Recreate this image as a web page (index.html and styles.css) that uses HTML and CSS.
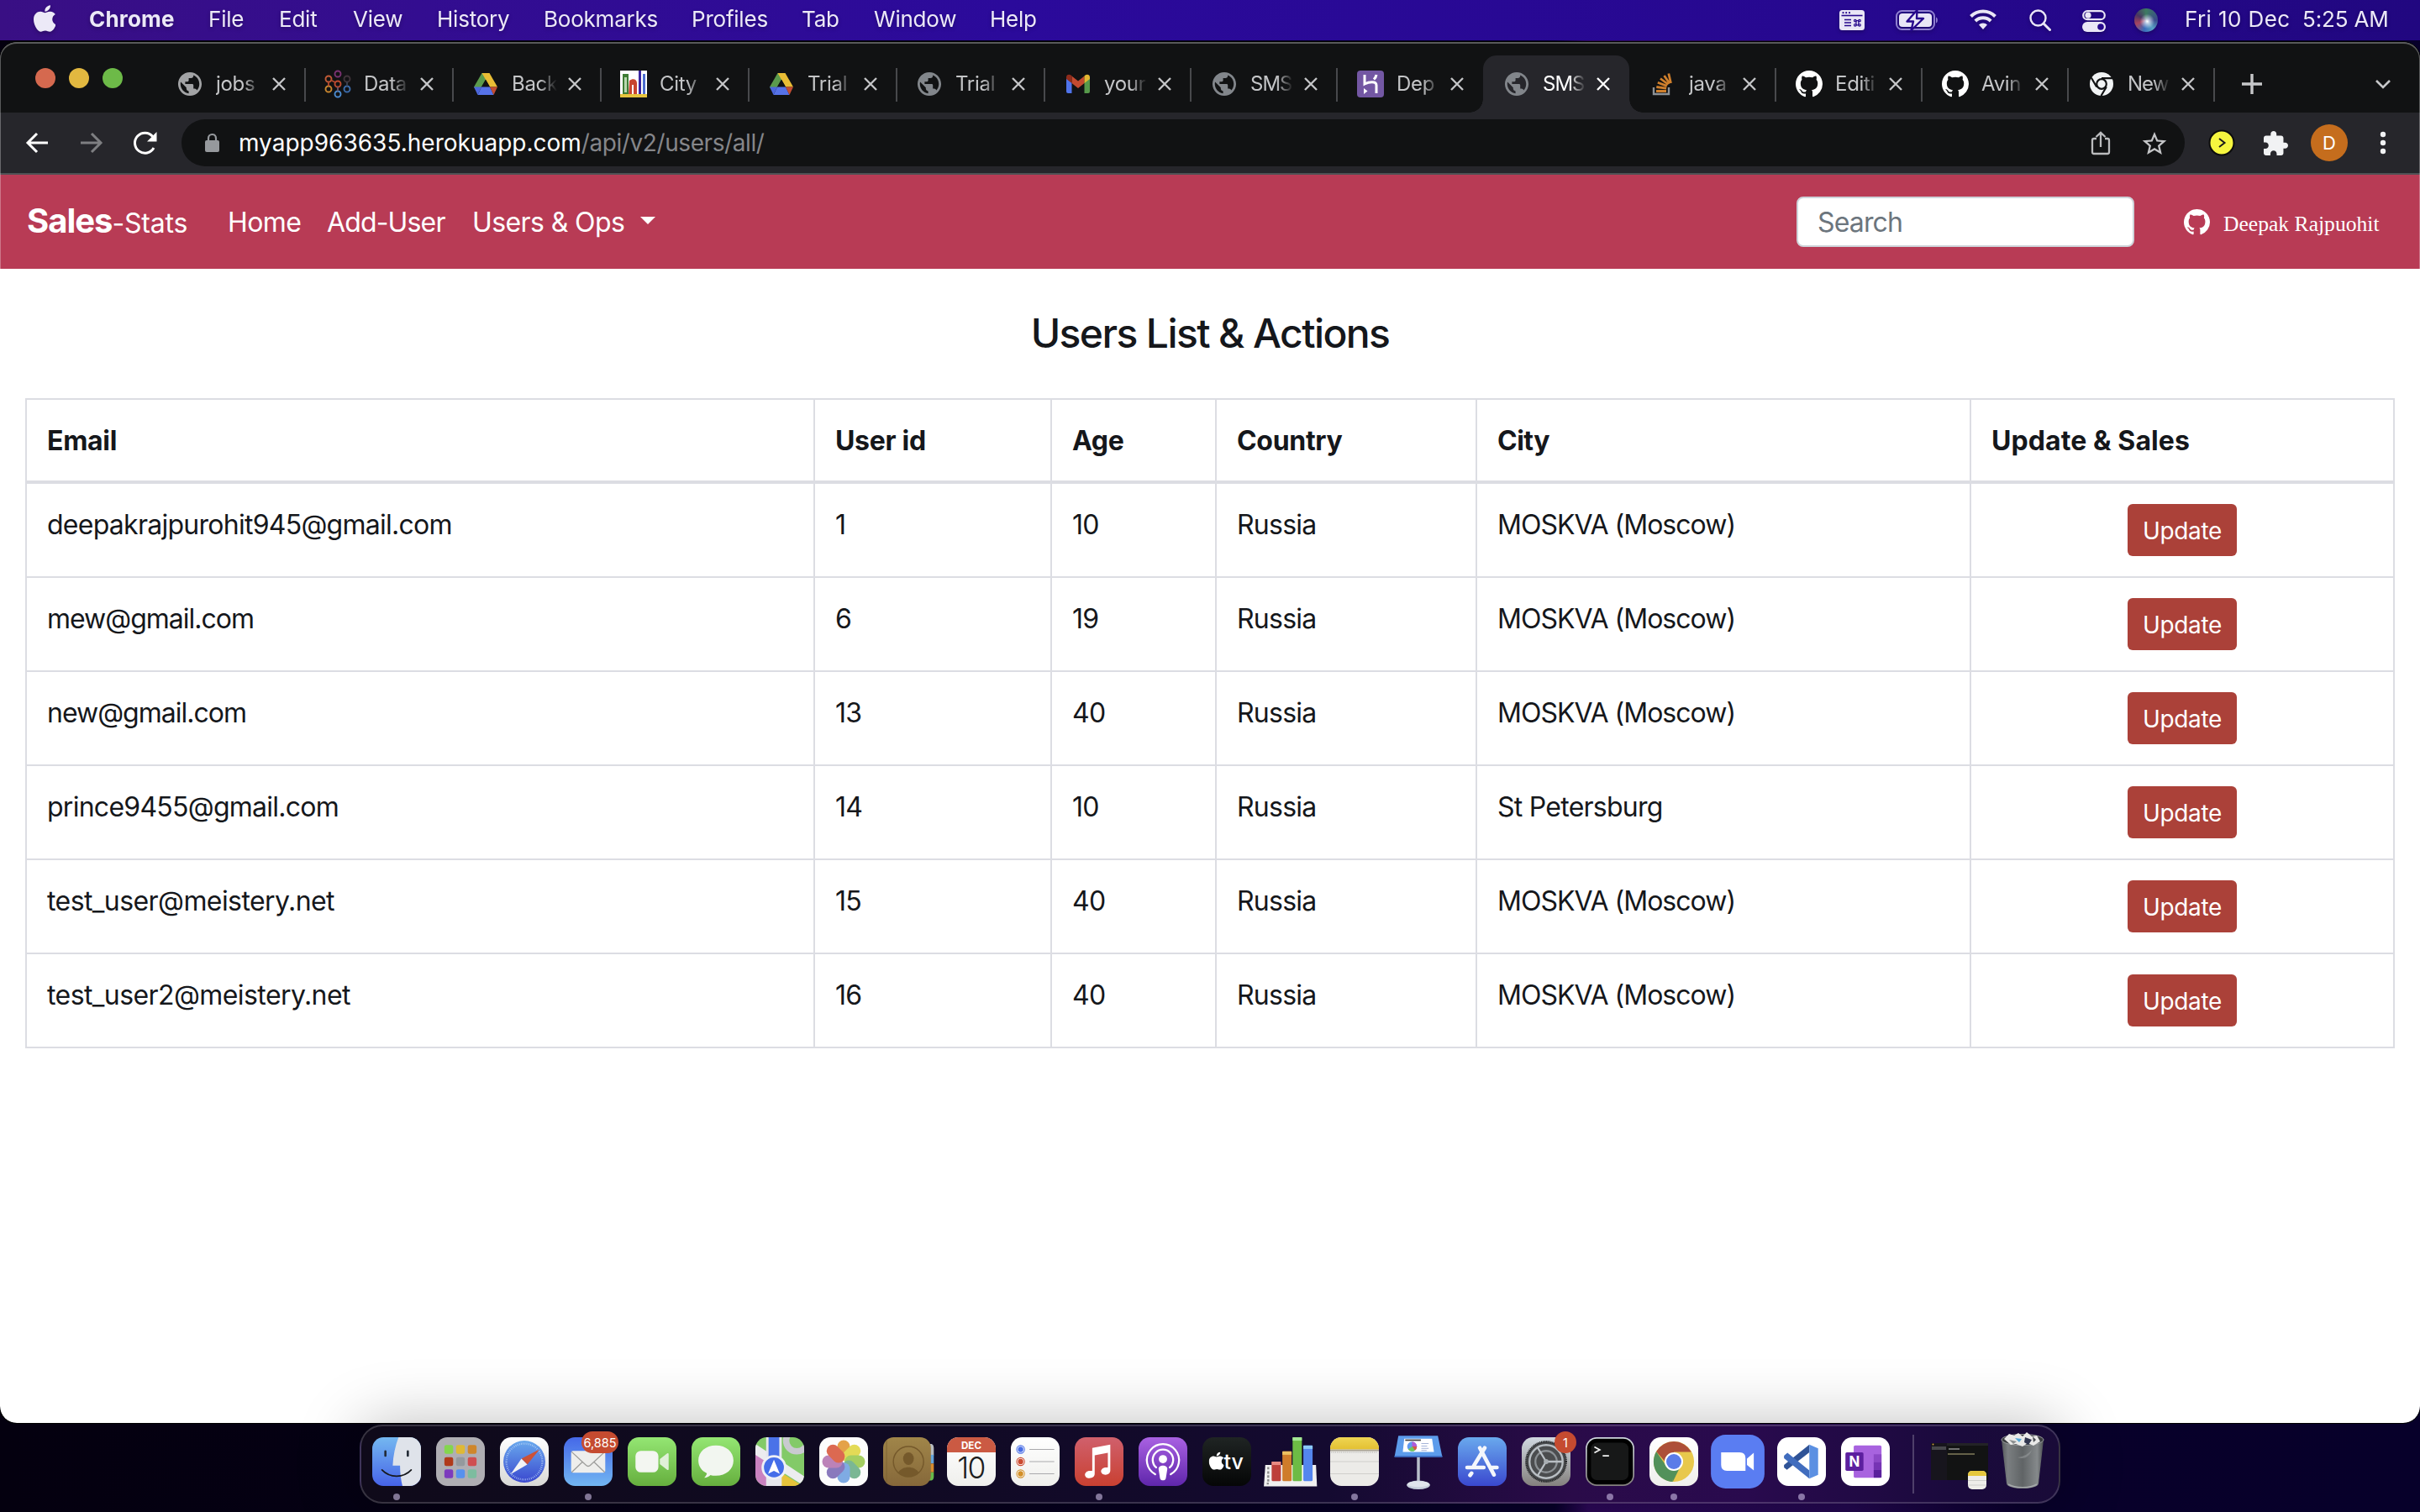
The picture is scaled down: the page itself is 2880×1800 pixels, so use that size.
FILE: index.html
```
<!DOCTYPE html>
<html lang="en">
<head>
<meta charset="utf-8">
<title>Sales-Stats</title>
<link rel="stylesheet" href="styles.css">
</head>
<body>
<svg class="defs" aria-hidden="true">
  <defs>
    <symbol id="globe" viewBox="0.6 0.6 22.8 22.8"><path d="M12 2C6.48 2 2 6.48 2 12s4.48 10 10 10 10-4.48 10-10S17.52 2 12 2zm-1 17.93c-3.95-.49-7-3.85-7-7.93 0-.62.08-1.21.21-1.79L9 15v1c0 1.1.9 2 2 2v1.93zm6.9-2.54c-.26-.81-1-1.39-1.9-1.39h-1v-3c0-.55-.45-1-1-1H8v-2h2c.55 0 1-.45 1-1V7h2c1.1 0 2-.9 2-2v-.41c2.93 1.19 5 4.06 5 7.41 0 2.08-.8 3.97-2.1 5.39z"/></symbol>
    <symbol id="github" viewBox="0 0 16 16"><path d="M8 0C3.58 0 0 3.58 0 8c0 3.54 2.29 6.53 5.47 7.59.4.07.55-.17.55-.38 0-.19-.01-.82-.01-1.49-2.01.37-2.53-.49-2.69-.94-.09-.23-.48-.94-.82-1.13-.28-.15-.68-.52-.01-.53.63-.01 1.08.58 1.23.82.72 1.21 1.87.87 2.33.66.07-.52.28-.87.51-1.07-1.78-.2-3.64-.89-3.64-3.95 0-.87.31-1.59.82-2.15-.08-.2-.36-1.02.08-2.12 0 0 .67-.21 2.2.82.64-.18 1.32-.27 2-.27s1.36.09 2 .27c1.53-1.04 2.2-.82 2.2-.82.44 1.1.16 1.92.08 2.12.51.56.82 1.27.82 2.15 0 3.07-1.87 3.75-3.65 3.95.29.25.54.73.54 1.48 0 1.07-.01 1.93-.01 2.2 0 .21.15.46.55.38A8.01 8.01 0 0 0 16 8c0-4.42-3.58-8-8-8z"/></symbol>
    <symbol id="apple" viewBox="4 32 367 448"><path d="M318.7 268.7c-.2-36.7 16.4-64.4 50-84.8-18.8-26.9-47.2-41.7-84.7-44.6-35.5-2.8-74.3 20.7-88.5 20.7-15 0-49.4-19.7-76.4-19.7C63.3 141.2 4 184.8 4 273.5q0 39.3 14.4 81.2c12.8 36.7 59 126.7 107.2 125.2 25.2-.6 43-17.9 75.8-17.9 31.8 0 48.3 17.9 76.4 17.9 48.6-.7 90.4-82.5 102.6-119.3-65.2-30.7-61.7-90-61.7-91.9zm-56.6-164.2c27.3-32.4 24.8-61.9 24-72.5-24.1 1.4-52 16.4-67.9 34.9-17.5 19.8-27.8 44.3-25.6 71.9 26.1 2 49.9-11.4 69.5-34.3z"/></symbol>
    <symbol id="drive" viewBox="0 0 32 32"><path fill="#5b9a4c" d="M11.500 3h9L6.500 27 2 19.500z"/><path fill="#e9bd35" d="M11.500 3h9L30 19.500h-9z"/><path fill="#111213" d="M16 10.800l-5 8.700h10z"/><path fill="#5672e8" d="M11 19.500h10l4.500 9.500H6.500z"/><path fill="#4c67dd" d="M2 19.500h9L6.500 29z"/><path fill="#c24d33" d="M21 19.500h9L25.500 29z"/></symbol>
    <symbol id="close" viewBox="0 0 16 16"><path fill="none" stroke="currentColor" stroke-width="2.400" d="M1 1l14 14M15 1L1 15"/></symbol>
    <linearGradient id="gBlue" x1="0" y1="0" x2="0" y2="1"><stop offset="0" stop-color="#74b8f0"/><stop offset="1" stop-color="#4663e8"/></linearGradient>
    <linearGradient id="gBlueUp" x1="0" y1="0" x2="0" y2="1"><stop offset="0" stop-color="#4568e8"/><stop offset="1" stop-color="#72b6f2"/></linearGradient>
    <linearGradient id="gGreen" x1="0" y1="0" x2="0" y2="1"><stop offset="0" stop-color="#94e673"/><stop offset="1" stop-color="#66af3e"/></linearGradient>
    <linearGradient id="gWhite" x1="0" y1="0" x2="0" y2="1"><stop offset="0" stop-color="#fff"/><stop offset="1" stop-color="#d8d8d6"/></linearGradient>
    <linearGradient id="gPaper" x1="0" y1="0" x2="0" y2="1"><stop offset="0" stop-color="#fff"/><stop offset="1" stop-color="#efefec"/></linearGradient>
    <linearGradient id="gRed" x1="0" y1="0" x2="0" y2="1"><stop offset="0" stop-color="#d0606c"/><stop offset="1" stop-color="#c94031"/></linearGradient>
    <linearGradient id="gPurple" x1="0" y1="0" x2="0" y2="1"><stop offset="0" stop-color="#a961e2"/><stop offset="1" stop-color="#5f26ab"/></linearGradient>
    <linearGradient id="gBrown" x1="0" y1="0" x2="0" y2="1"><stop offset="0" stop-color="#a08549"/><stop offset="1" stop-color="#86683a"/></linearGradient>
    <linearGradient id="gDark" x1="0" y1="0" x2="0" y2="1"><stop offset="0" stop-color="#1f2423"/><stop offset="1" stop-color="#050606"/></linearGradient>
    <linearGradient id="gSteel" x1="0" y1="0" x2="0" y2="1"><stop offset="0" stop-color="#d0d8e0"/><stop offset="1" stop-color="#84817e"/></linearGradient>
    <linearGradient id="gStore" x1="0" y1="0" x2="0" y2="1"><stop offset="0" stop-color="#69a9ed"/><stop offset="1" stop-color="#3a48cf"/></linearGradient>
    <linearGradient id="gYellow" x1="0" y1="0" x2="0" y2="1"><stop offset="0" stop-color="#efd553"/><stop offset="1" stop-color="#e3c032"/></linearGradient>
    <linearGradient id="gBin" x1="0" y1="0" x2="1" y2="0"><stop offset="0" stop-color="#54585a"/><stop offset=".15" stop-color="#7b7f81"/><stop offset=".5" stop-color="#606466"/><stop offset=".85" stop-color="#85898b"/><stop offset="1" stop-color="#4b4f51"/></linearGradient>
    <clipPath id="tile"><rect width="100" height="100" rx="23"/></clipPath>
  </defs>
</svg>

<header class="menubar">
  <svg class="apple-menu"><use href="#apple"/></svg>
  <nav class="menus">
    <span class="app-name">Chrome</span><span>File</span><span>Edit</span><span>View</span><span>History</span><span>Bookmarks</span><span>Profiles</span><span>Tab</span><span>Window</span><span>Help</span>
  </nav>
  <div class="status">
    <svg class="st-keys" viewBox="0 0 30 24"><rect width="30" height="24" rx="3.500" fill="#e9e6f6"/><path d="M2.500 6.500h25" stroke="#26088c" stroke-width="1.600"/><g fill="#26088c"><circle cx="4.500" cy="3.200" r="1.100"/><circle cx="8.200" cy="3.200" r="1.100"/><circle cx="12" cy="3.200" r="1.100"/></g><path d="M6 11.500h8M6 15h8M6 18.500h8" stroke="#26088c" stroke-width="1.500"/><g fill="none" stroke="#26088c" stroke-width="1.200"><circle cx="18.800" cy="12.600" r="1.300"/><circle cx="24" cy="12.600" r="1.300"/><circle cx="18.800" cy="17.800" r="1.300"/><circle cx="24" cy="17.800" r="1.300"/><path d="M20 12.600v5.200h2.800v-5.200z"/></g></svg>
    <svg class="st-battery" viewBox="0 0 51 26"><rect x="1" y="2" width="45" height="22" rx="6.500" fill="none" stroke="#8f7fd0" stroke-width="2"/><rect x="4" y="5" width="39" height="16" rx="4" fill="#e9e6f6"/><path d="M48 9.500c2.500.8 2.500 6.200 0 7z" fill="#8f7fd0"/><path d="M25.500 1L13.500 14.500h7.500L18.500 25 33 11h-8z" fill="#e9e6f6" stroke="#26088c" stroke-width="2.400" stroke-linejoin="round"/></svg>
    <svg class="st-wifi" viewBox="0 0 32 24"><g fill="none" stroke="#e9e6f6" stroke-width="4"><path d="M1.500 8.500a20.500 20.500 0 0 1 29 0"/><path d="M6.800 14a13 13 0 0 1 18.400 0"/></g><path d="M16 24l-5-5.400a7 7 0 0 1 10 0z" fill="#e9e6f6"/></svg>
    <svg class="st-search" viewBox="0 0 26 26"><circle cx="10.500" cy="10.500" r="9" fill="none" stroke="#e9e6f6" stroke-width="2.400"/><path d="M17 17l7.500 7.500" stroke="#e9e6f6" stroke-width="3" stroke-linecap="round"/></svg>
    <svg class="st-control" viewBox="0 0 28 26"><rect x="1.200" y="1.200" width="25.600" height="10" rx="5" fill="none" stroke="#e9e6f6" stroke-width="2.200"/><circle cx="7" cy="6.200" r="3.600" fill="#e9e6f6"/><rect y="14" width="28" height="12" rx="6" fill="#e9e6f6"/><circle cx="22" cy="20" r="3.800" fill="#26088c"/></svg>
    <span class="siri"></span>
    <span class="date">Fri 10 Dec</span>
    <span class="time">5:25 AM</span>
  </div>
</header>

<main class="window">
  <div class="tabstrip">
    <div class="lights"><i class="red"></i><i class="amber"></i><i class="green"></i></div>
    <div class="tabs">
      <div class="tab wide"><svg class="fav pale"><use href="#globe"/></svg><span class="label">jobs</span><svg class="x"><use href="#close"/></svg></div>
      <div class="tab wide"><svg class="fav" viewBox="0 0 32 32"><g fill="none" stroke-width="1.900"><circle cx="16" cy="4" r="3.500" stroke="#7b3272"/><circle cx="5" cy="10" r="3.500" stroke="#c25b36"/><circle cx="27" cy="10" r="3.500" stroke="#40343a"/><circle cx="16" cy="16" r="3.500" stroke="#c04a30"/><circle cx="5" cy="22" r="3.500" stroke="#c9872f"/><circle cx="27" cy="22" r="3.500" stroke="#3c6dad"/><circle cx="16" cy="28" r="3.500" stroke="#4b8bd0"/><path d="M13 14L8 11.500M5 13.500v5" stroke="#b0482f"/><path d="M27 13.500v5" stroke="#3a4353"/><path d="M16 19.500v5" stroke="#6c5568"/></g></svg><span class="label">Data</span><svg class="x"><use href="#close"/></svg></div>
      <div class="tab wide"><svg class="fav"><use href="#drive"/></svg><span class="label">Back</span><svg class="x"><use href="#close"/></svg></div>
      <div class="tab wide"><svg class="fav" viewBox="0 0 32 32"><path fill="#fff" d="M0 0h32v32H0z"/><path fill="#3f7d35" d="M3 4h7v25H3z"/><path fill="#b9d8b0" d="M5 8h3v18H5z"/><path fill="#c8452f" d="M11 12c4-3 9-2 9 3v15h-4V17h-2v13h-4z"/><path fill="#3a24a0" d="M22 0h3v30h-3z"/><path fill="#4b6cd0" d="M27 4h3v25h-3z"/><path fill="#e6c33d" d="M0 28h32v4H0z"/></svg><span class="label">City</span><svg class="x"><use href="#close"/></svg></div>
      <div class="tab wide"><svg class="fav"><use href="#drive"/></svg><span class="label">Trial</span><svg class="x"><use href="#close"/></svg></div>
      <div class="tab wide"><svg class="fav grey"><use href="#globe"/></svg><span class="label">Trial</span><svg class="x"><use href="#close"/></svg></div>
      <div class="tab"><svg class="fav" viewBox="0 0 32 32"><path fill="#4f73ea" d="M2 9l6.500 5v13H4a2 2 0 0 1-2-2z"/><path fill="#579a4b" d="M30 9l-6.500 5v13H28a2 2 0 0 0 2-2z"/><path fill="#c34a30" d="M8.500 6.500L16 12.500l7.500-6V15L16 21l-7.500-6z"/><path fill="#8f2c1c" d="M2 8c0-3.500 3.500-4 5.500-2.500l1 1V15L2 10z"/><path fill="#e3b732" d="M30 8c0-3.500-3.500-4-5.500-2.500l-1 1V15L30 10z"/></svg><span class="label">your</span><svg class="x"><use href="#close"/></svg></div>
      <div class="tab"><svg class="fav grey"><use href="#globe"/></svg><span class="label caps">SMS</span><svg class="x"><use href="#close"/></svg></div>
      <div class="tab before-active"><svg class="fav" viewBox="0 0 32 32"><rect width="32" height="32" rx="4" fill="#7357a3"/><path d="M9 5v11c5-2.500 14-4 14 1.500V27M23 5c-.3 2.500-1.500 4-3 5.500" fill="none" stroke="#fff" stroke-width="3"/><path fill="#fff" d="M8 21l4.500 3.500L8 28z"/></svg><span class="label">Dep</span><svg class="x"><use href="#close"/></svg></div>
      <div class="tab active"><svg class="fav grey"><use href="#globe"/></svg><span class="label caps">SMS</span><svg class="x"><use href="#close"/></svg></div>
      <div class="tab"><svg class="fav" viewBox="0 0 32 32"><path d="M5 20v8h18v-8" fill="none" stroke="#8d9297" stroke-width="2.400"/><g stroke="#cf7f2c" stroke-width="2.800"><path d="M8 24.500h12M8.300 19.500l11.800 1.600M9.800 14.200l11 4.200M13 9.500l9.300 7M17.500 6l6.500 9.500M22.800 3.500l2.700 11.500"/></g></svg><span class="label">java</span><svg class="x"><use href="#close"/></svg></div>
      <div class="tab"><svg class="fav white"><use href="#github"/></svg><span class="label">Editi</span><svg class="x"><use href="#close"/></svg></div>
      <div class="tab"><svg class="fav white"><use href="#github"/></svg><span class="label">Avin</span><svg class="x"><use href="#close"/></svg></div>
      <div class="tab"><svg class="fav" viewBox="0 0 32 32"><circle cx="16" cy="16" r="14" fill="#f1f3f4"/><circle cx="16" cy="16" r="5.800" fill="none" stroke="#111213" stroke-width="2.200"/><path d="M16 9.200h13M10.200 19.500L3.800 8.500M21.800 19.500L15.500 30" stroke="#111213" stroke-width="2.200"/></svg><span class="label caps">New</span><svg class="x"><use href="#close"/></svg></div>
    </div>
    <svg class="new-tab" viewBox="0 0 24 24"><path d="M12 0v24M0 12h24" stroke="#c6c7c9" stroke-width="3.400"/></svg>
    <svg class="tab-search" viewBox="0 0 20 12"><path d="M2 2l8 8 8-8" fill="none" stroke="#c6c7c9" stroke-width="2.600"/></svg>
  </div>

  <div class="toolbar">
    <svg class="back" viewBox="0 0 27 26"><path d="M26 13H3M13 2L2 13l11 11" fill="none" stroke="#fff" stroke-width="3"/></svg>
    <svg class="forward" viewBox="0 0 27 26"><path d="M1 13h23M14 2l11 11-11 11" fill="none" stroke="#7e7f82" stroke-width="3"/></svg>
    <svg class="reload" viewBox="0 0 28 28"><path d="M24 20a12 12 0 1 1-1.300-13.500" fill="none" stroke="#fff" stroke-width="3"/><path d="M27.500 1v11.500H16z" fill="#fff"/></svg>
    <div class="omnibox">
      <svg class="lock" viewBox="0 0 17 22"><rect y="8" width="17" height="14" rx="2" fill="#96999d"/><path d="M4 9V5.500a4.500 4.500 0 0 1 9 0V9" fill="none" stroke="#96999d" stroke-width="2.200"/></svg>
      <span class="host">myapp963635.herokuapp.com</span><span class="path">/api/v2/users/all/</span>
      <svg class="share" viewBox="0 0 22 29"><path d="M6 9H3a2 2 0 0 0-2 2v14a2 2 0 0 0 2 2h16a2 2 0 0 0 2-2V11a2 2 0 0 0-2-2h-3M11 19V2M5.500 7L11 1.800 16.500 7" fill="none" stroke="#babbbd" stroke-width="2.300"/></svg>
      <svg class="star" viewBox="1.500 1.500 21 20"><path fill="#c4c5c7" d="M22 9.240l-7.190-.62L12 2 9.190 8.630 2 9.240l5.460 4.730L5.820 21 12 17.270 18.180 21l-1.630-7.030L22 9.240zM12 15.400l-3.760 2.270 1-4.280-3.320-2.880 4.380-.38L12 6.100l1.710 4.040 4.380.38-3.320 2.880 1 4.280L12 15.400z"/></svg>
    </div>
    <svg class="ext" viewBox="0 0 32 32"><circle cx="16" cy="16" r="14.500" fill="#f6f63f" stroke="#0c0c0c" stroke-width="2"/><path d="M13 11l6.500 5-6.500 5" fill="none" stroke="#1b1b1b" stroke-width="2"/></svg>
    <svg class="puzzle" viewBox="2 1 21 21"><path fill="#f1f2f4" d="M20.500 11H19V7c0-1.100-.9-2-2-2h-4V3.500C13 2.120 11.880 1 10.500 1S8 2.120 8 3.500V5H4c-1.100 0-1.990.9-1.990 2v3.800H3.500c1.490 0 2.700 1.210 2.700 2.700s-1.210 2.700-2.700 2.700H2V20c0 1.100.9 2 2 2h3.800v-1.500c0-1.490 1.210-2.700 2.700-2.700 1.490 0 2.700 1.210 2.700 2.700V22H17c1.100 0 2-.9 2-2v-4h1.500c1.380 0 2.500-1.120 2.500-2.500S21.880 11 20.500 11z"/></svg>
    <span class="avatar">D</span>
    <svg class="dots" viewBox="0 0 8 28"><g fill="#f1f2f4"><circle cx="4" cy="4" r="3.200"/><circle cx="4" cy="14" r="3.200"/><circle cx="4" cy="24" r="3.200"/></g></svg>
  </div>

  <div class="navbar">
    <span class="brand"><b>Sales</b>-Stats</span>
    <a class="home">Home</a><a class="add">Add-User</a><a class="ops">Users &amp; Ops</a><i class="caret"></i>
    <div class="search">Search</div>
    <svg class="gh"><use href="#github"/></svg>
    <span class="author">Deepak Rajpuohit</span>
  </div>

  <section class="page">
    <h1>Users List &amp; Actions</h1>
    <table>
      <colgroup><col class="c1"><col class="c2"><col class="c3"><col class="c4"><col class="c5"><col class="c6"></colgroup>
      <thead><tr><th>Email</th><th>User id</th><th>Age</th><th>Country</th><th class="tight">City</th><th class="loose">Update &amp; Sales</th></tr></thead>
      <tbody>
        <tr><td>deepakrajpurohit945@gmail.com</td><td>1</td><td>10</td><td>Russia</td><td class="city">MOSKVA (Moscow)</td><td class="act"><span class="btn">Update</span></td></tr>
        <tr><td class="short">mew@gmail.com</td><td>6</td><td>19</td><td>Russia</td><td class="city">MOSKVA (Moscow)</td><td class="act"><span class="btn">Update</span></td></tr>
        <tr><td class="short">new@gmail.com</td><td>13</td><td>40</td><td>Russia</td><td class="city">MOSKVA (Moscow)</td><td class="act"><span class="btn">Update</span></td></tr>
        <tr><td>prince9455@gmail.com</td><td>14</td><td>10</td><td>Russia</td><td>St Petersburg</td><td class="act"><span class="btn">Update</span></td></tr>
        <tr><td class="long">test_user@meistery.net</td><td>15</td><td>40</td><td>Russia</td><td class="city">MOSKVA (Moscow)</td><td class="act"><span class="btn">Update</span></td></tr>
        <tr><td class="long">test_user2@meistery.net</td><td>16</td><td>40</td><td>Russia</td><td class="city">MOSKVA (Moscow)</td><td class="act"><span class="btn">Update</span></td></tr>
      </tbody>
    </table>
  </section>
</main>

<footer class="dock">
  <div class="app running"><svg viewBox="0 0 100 100"><g clip-path="url(#tile)"><path fill="url(#gBlue)" d="M0 0h100v100H0z"/><path fill="#dfe3ea" d="M54 0c-7 18-11 38-12 58h15c0 16 2 30 5 42h38V0z"/></g><path d="M27 29v9M73 29v9" stroke="#222a35" stroke-width="4.500" stroke-linecap="round"/><path d="M20 67c16 17 44 17 60 0" fill="none" stroke="#17191d" stroke-width="3" stroke-linecap="round"/></svg></div>
  <div class="app"><svg viewBox="0 0 100 100"><rect width="100" height="100" rx="23" fill="#afaeb3"/><g><rect x="17" y="16" width="18" height="18" rx="4" fill="#84d64e"/><rect x="41" y="16" width="18" height="18" rx="4" fill="#dfb936"/><rect x="65" y="16" width="18" height="18" rx="4" fill="#cf862b"/><rect x="17" y="41" width="18" height="18" rx="4" fill="#b03a1b"/><rect x="41" y="41" width="18" height="18" rx="4" fill="#94999e"/><rect x="65" y="41" width="18" height="18" rx="4" fill="#cf4e51"/><rect x="17" y="66" width="18" height="18" rx="4" fill="#7c3bbd"/><rect x="41" y="66" width="18" height="18" rx="4" fill="#5791ee"/><rect x="65" y="66" width="18" height="18" rx="4" fill="#7dbc9f"/></g></svg></div>
  <div class="app"><svg viewBox="0 0 100 100"><rect width="100" height="100" rx="23" fill="url(#gWhite)"/><circle cx="50" cy="50" r="43" fill="url(#gStore)"/><circle cx="50" cy="50" r="37" fill="none" stroke="#b8d3f6" stroke-width="4" stroke-dasharray="1.200 2.670"/><path d="M81 25L56 56 44 44z" fill="#cc5138"/><path d="M22 76L56 56 44 44z" fill="#f2f3f5"/></svg></div>
  <div class="app running"><svg viewBox="0 0 100 100"><rect width="100" height="100" rx="23" fill="url(#gBlueUp)"/><rect x="15" y="28" width="70" height="45" rx="4" fill="#eeeeec"/><path d="M16 30l29 27c3 3 7 3 10 0l29-27M16 72l22-21M84 72L62 51" fill="none" stroke="#9d9d9b" stroke-width="2.200"/></svg><span class="badge pill">6,885</span></div>
  <div class="app"><svg viewBox="0 0 100 100"><rect width="100" height="100" rx="23" fill="url(#gGreen)"/><rect x="16" y="28" width="47" height="44" rx="11" fill="#f3f6f1"/><path d="M66 45l15-12c2-1 3 0 3 2v30c0 2-1 3-3 2L66 55z" fill="#e0f0d8"/></svg></div>
  <div class="app"><svg viewBox="0 0 100 100"><rect width="100" height="100" rx="23" fill="url(#gGreen)"/><path d="M50 17c21 0 36 13 36 31S71 79 50 79c-4 0-8-.5-11-1.500-3 3-8 5.500-13 5.500 3-3 5-6 5.500-9C20 69 14 59 14 48c0-18 15-31 36-31z" fill="#f2f6f0"/></svg></div>
  <div class="app"><svg viewBox="0 0 100 100"><g clip-path="url(#tile)"><path fill="#83ca68" d="M0 0h100v100H0z"/><path fill="#c982c0" d="M0 30l25 18v52H0z"/><path fill="#e6c33b" d="M53 100V73l44 27z"/><path fill="#ececef" d="M0 14l100 66v20L0 36z"/><path fill="#e6e7ec" d="M22 0h32v100H22z"/><path fill="#4a72e8" d="M27 0h22v55H27z"/><circle cx="85" cy="7" r="22" fill="none" stroke="#c9cad0" stroke-width="13"/></g><circle cx="38" cy="62" r="23" fill="#456ee9" stroke="#eef0f5" stroke-width="5"/><path d="M38 46l12 29-12-6-12 6z" fill="#fff"/></svg></div>
  <div class="app"><svg viewBox="0 0 100 100"><rect width="100" height="100" rx="23" fill="#fcfcfc"/><g opacity=".86"><rect x="37" y="6" width="26" height="42" rx="13" fill="#e1942c"/><rect x="37" y="6" width="26" height="42" rx="13" fill="#dfd53b" transform="rotate(45 50 50)"/><rect x="37" y="6" width="26" height="42" rx="13" fill="#96c748" transform="rotate(90 50 50)"/><rect x="37" y="6" width="26" height="42" rx="13" fill="#67ac83" transform="rotate(135 50 50)"/><rect x="37" y="6" width="26" height="42" rx="13" fill="#6b9ee0" transform="rotate(180 50 50)"/><rect x="37" y="6" width="26" height="42" rx="13" fill="#7764b3" transform="rotate(225 50 50)"/><rect x="37" y="6" width="26" height="42" rx="13" fill="#b26fae" transform="rotate(270 50 50)"/><rect x="37" y="6" width="26" height="42" rx="13" fill="#d75236" transform="rotate(315 50 50)"/></g></svg></div>
  <div class="app"><svg viewBox="0 0 100 100"><path fill="#b8bcc0" d="M92 14h8q4 2 4 8v15H92z"/><path fill="#66a5dc" d="M92 36h12v18H92z"/><path fill="#d98c2f" d="M92 54h12v18H92z"/><path fill="#67b94a" d="M92 72h12v9q0 6-5 8h-7z"/><rect width="98" height="100" rx="22" fill="url(#gBrown)"/><path d="M7 6v88" stroke="#7c6233" stroke-width="1.500"/><circle cx="52" cy="50" r="31" fill="none" stroke="#75592b" stroke-width="2.500"/><ellipse cx="52" cy="44" rx="11" ry="13" fill="#75592b"/><path d="M31 72c9-14 33-14 42 0-11 12-31 12-42 0z" fill="#75592b"/></svg></div>
  <div class="app"><svg viewBox="0 0 100 100"><g clip-path="url(#tile)"><path fill="url(#gPaper)" d="M0 0h100v100H0z"/><path fill="#cb5a43" d="M0 0h100v31H0z"/></g><text class="cal-month" x="50" y="24">DEC</text><text class="cal-day" x="49" y="84">10</text></svg></div>
  <div class="app"><svg viewBox="0 0 100 100"><rect width="100" height="100" rx="23" fill="url(#gPaper)"/><path d="M38 25h51M38 50h51M38 75h51" stroke="#a9a9ac" stroke-width="2"/><g stroke-width="1.800"><g fill="#fff"><circle cx="20" cy="25" r="8" stroke="#4a6fe6"/><circle cx="20" cy="50" r="8" stroke="#cb4a30"/><circle cx="20" cy="75" r="8" stroke="#d28f28"/></g></g><circle cx="20" cy="25" r="5.500" fill="#4a6fe6"/><circle cx="20" cy="50" r="5.500" fill="#cb4a30"/><circle cx="20" cy="75" r="5.500" fill="#d28f28"/></svg></div>
  <div class="app running"><svg viewBox="0 0 100 100"><rect width="100" height="100" rx="23" fill="url(#gRed)"/><path fill="#fff" d="M36 22l37-7v53c0 5-4 9-10 9-5 0-9-3-9-7s4-8 10-8c2 0 3 0 4-.5V32l-27 5v38c0 5-4 9-11 9-5 0-9-3-9-7s4-8 10-8c2 0 4 0 5-.5z"/></svg></div>
  <div class="app"><svg viewBox="0 0 100 100"><rect width="100" height="100" rx="23" fill="url(#gPurple)"/><g fill="none" stroke="#fff" stroke-width="4" stroke-linecap="round"><path d="M34 76a33 33 0 1 1 32 0"/><path d="M36 62a21 21 0 1 1 28 0"/></g><circle cx="50" cy="45" r="8.500" fill="#fff"/><path d="M41 65c0-9 18-9 18 0l-3 19c-1 6-11 6-12 0z" fill="#fff"/></svg></div>
  <div class="app"><svg viewBox="0 0 100 100"><rect width="100" height="100" rx="23" fill="url(#gDark)"/><svg x="13" y="30" width="31" height="37" fill="#fff"><use href="#apple"/></svg><text class="tv" x="64" y="65">tv</text></svg></div>
  <div class="app"><svg viewBox="0 0 100 100"><path fill="#f1f1f0" d="M-2 57h104l2 44H-5z"/><path d="M4 61v5M4 70v5M4 78v5M4 86v5M3 93v4" stroke="#8a8a8a" stroke-width="4"/><rect x="11" y="50" width="19" height="40" rx="2" fill="#bd403a"/><rect x="33" y="29" width="19" height="61" rx="2" fill="#cf7c2b"/><rect x="54" y="0" width="19" height="90" rx="2" fill="#6dbb45"/><rect x="76" y="17" width="19" height="73" rx="2" fill="#5486ee"/><path fill="#e88a82" d="M11 50h19v7H11z"/><path fill="#ecc161" d="M33 29h19v7H33z"/><path fill="#a3e893" d="M54 0h19v7H54z"/><path fill="#8ccaf8" d="M76 17h19v7H76z"/></svg></div>
  <div class="app running"><svg viewBox="0 0 100 100"><g clip-path="url(#tile)"><path fill="#ecebe8" d="M0 0h100v100H0z"/><path fill="url(#gYellow)" d="M0 0h100v25H0z"/><path d="M0 27h100" stroke="#a9a393" stroke-width="3"/><path d="M2 31h96" stroke="#a5a5a3" stroke-width="1.500" stroke-dasharray="2 2"/><path d="M0 50h100M0 75h100" stroke="#cfcfcc" stroke-width="2"/></g></svg></div>
  <div class="app"><svg viewBox="0 0 100 100"><path d="M47 40h6v56h-6z" fill="#b9bfca"/><ellipse cx="50" cy="98" rx="24" ry="9" fill="#c7cfdb"/><ellipse cx="50" cy="96" rx="22" ry="6" fill="#e0e5ec"/><path fill="#5c9ceb" d="M9-3h81l9 43H1z"/><path fill="#3e72c8" d="M1 38h98v3H1z"/><path fill="#fff" d="M21 3h57l4 27H18z"/><path d="M23 6h32" stroke="#444" stroke-width="3"/><circle cx="37" cy="19" r="10" fill="#5e9af0"/><path d="M37 19V9a10 10 0 0 1 10 10z" fill="#b05bd5"/><path d="M37 19h10a10 10 0 0 1-4 8z" fill="#d45b45"/><path d="M37 19l6 8a10 10 0 0 1-14-2z" fill="#6fc95a"/><path d="M56 13h15M56 18h12M56 23h15M56 27h11" stroke="#a6b4d8" stroke-width="1.800"/></svg></div>
  <div class="app"><svg viewBox="0 0 100 100"><rect width="100" height="100" rx="23" fill="url(#gStore)"/><g stroke="#f4f7fc" stroke-width="8" stroke-linecap="round"><path d="M55 22L33 58M45 22l29 55M19 62h34M70 62h10M28 74l-3 4"/></g></svg></div>
  <div class="app"><svg viewBox="0 0 100 100"><rect width="100" height="100" rx="23" fill="url(#gSteel)"/><circle cx="50" cy="50" r="41" fill="#4b4d4f" stroke="#222426" stroke-width="4" stroke-dasharray="2 1.300"/><circle cx="50" cy="50" r="34" fill="none" stroke="#b9bfc4" stroke-width="4"/><circle cx="50" cy="50" r="22" fill="none" stroke="#8b9094" stroke-width="4"/><path d="M50 50h33M50 50L33 22M50 50L33 78" stroke="#b9bfc4" stroke-width="4"/><circle cx="50" cy="50" r="5" fill="#a9afb3"/></svg><span class="badge round">1</span></div>
  <div class="app running"><svg viewBox="0 0 100 100"><rect width="100" height="100" rx="23" fill="url(#gSteel)"/><rect x="3" y="3" width="94" height="94" rx="20" fill="#000"/><rect x="11" y="11" width="77" height="77" rx="12" fill="#171818"/><path d="M18 20l11 6-11 6M35 38h13" fill="none" stroke="#f3f3f3" stroke-width="3"/></svg></div>
  <div class="app running"><svg viewBox="0 0 100 100"><rect width="100" height="100" rx="23" fill="url(#gPaper)"/><circle cx="50" cy="50" r="41.500" fill="#e8c84c"/><path fill="#ad4f38" d="M50 50h-18L14 29.300A41.500 41.500 0 0 1 86 30H50z"/><path fill="#52915a" d="M14 29.300L35 60l15 8-2.500 23.500A41.500 41.500 0 0 1 14 29.300z"/><path fill="#52915a" d="M48 91.500L62 63 45 66z"/><circle cx="50" cy="50" r="19" fill="#fff"/><circle cx="50" cy="50" r="15.500" fill="#5b7ce8"/></svg></div>
  <div class="app"><svg viewBox="0 0 100 100"><rect x="-5" y="-5" width="110" height="110" rx="30" fill="#5a7df2"/><path fill="#fff" d="M16 31h38q12 0 12 12v26H28q-12 0-12-12zM69 44l14-12v36L69 57z"/></svg></div>
  <div class="app running"><svg viewBox="0 0 100 100"><rect width="100" height="100" rx="23" fill="#fff"/><path fill="#2f5397" d="M14 62l6 5 46-36V15L14 57z"/><path fill="#416dbe" d="M14 38l7-6 45 36v17L14 43z"/><path fill="#5b90e2" d="M66 15l18 8v54l-18 8z"/></svg></div>
  <div class="app"><svg viewBox="0 0 100 100"><rect width="100" height="100" rx="23" fill="#fff"/><rect x="26" y="17" width="57" height="66" rx="3" fill="#a863df"/><path fill="#8c48c6" d="M67 35h16v16H67z"/><path fill="#7634b4" d="M67 51h16v16H67z"/><path fill="#59209c" d="M67 67h16v16H67z"/><rect x="9" y="31" width="37" height="38" rx="3" fill="#5c1f9f"/><text class="note-n" x="27.500" y="60">N</text></svg></div>
  <i class="divider"></i>
  <svg class="minimized" viewBox="0 0 68 56"><path fill="#121313" d="M0 0h68v44H0z"/><path fill="#17151d" d="M0 0h19v44H0z"/><path fill="#232326" d="M19 0h49v3H19z"/><circle cx="2.500" cy="1.500" r=".9" fill="#d8a53c"/><path fill="#47474b" d="M1 4h17v4H1z"/><path d="M21 7h13" stroke="#9a9a9a" stroke-width="1.400"/><path d="M20 13h32" stroke="#8a8461" stroke-width="1.400"/><rect x="44" y="33" width="22" height="22" rx="5" fill="#eeede9"/><path fill="#e6c83c" d="M44 39v-1q0-5 5-5h12q5 0 5 5v1z"/><path d="M44 44.500h22M44 50h22" stroke="#cfcfcc"/></svg>
  <svg class="trash" viewBox="0 0 52 68"><path fill="url(#gBin)" d="M1 9h50l-6 52c-1 8-37 8-38 0z"/><ellipse cx="26" cy="9" rx="25" ry="6.500" fill="#3a3d3f" stroke="#9a9d9f"/><path fill="#e9e9e8" d="M4 8l6-6 6 2 5-3 5 4 5-5 6 5 6-1 4 7-8 5-7-3-6 4-8-3-6 1z"/><path fill="#57a9d8" d="M17 7l8 1-3 4z"/><path fill="#313650" d="M29 6l8 3-4 6-5-3z"/><path fill="#8b8f90" d="M10 9l5 5 4-3z"/><path fill="#4c4f52" d="M38 5l4 4-3 3z"/><path fill="#9da1a3" opacity=".5" d="M20 30c8-1 14-5 17-9-2 7-8 12-17 9z"/><path d="M9 62c8 5 26 5 34 0" fill="none" stroke="#a3a7a9" stroke-width="1.500"/></svg>
</footer>
</body>
</html>
```
FILE: styles.css
```
* { box-sizing: border-box; }

body {
  margin: 0;
  width: 2880px;
  height: 1800px;
  overflow: hidden;
  display: flex;
  flex-direction: column;
  font-family: Inter, "Liberation Sans", sans-serif;
  background:
    linear-gradient(90deg, #04000f 0, #050018 1000px, #07002a 1850px, #2c0858 1890px, #230750 2200px, #08002a 2420px, #07002a 2880px);
}

svg { display: block; flex: none; overflow: visible; }
.defs { position: absolute; width: 0; height: 0; }

/* macOS menu bar */
.menubar {
  height: 48px;
  flex: none;
  display: flex;
  align-items: flex-start;
  padding-left: 40px;
  background: linear-gradient(90deg, #390f84 0, #330d90 500px, #2b0a9b 1200px, #26088f 2200px, #210780 2880px);
  color: #ece9f7;
  font-size: 26px;
  line-height: 46px;
  white-space: nowrap;
}
.menubar svg, .menubar span { filter: drop-shadow(0 2px 2px rgba(0, 0, 0, .25)); }
.apple-menu { width: 26px; height: 32px; margin-top: 6px; fill: #ece9f7; }
.menus {
  margin-left: 40px;
  display: grid;
  grid-template-columns: 142px 84px 88px 100px 127px 176px 131px 86px 138px 80px;
  letter-spacing: -.22px;
}
.app-name { font-weight: 700; letter-spacing: .2px; }
.status { flex: 1; display: flex; justify-content: flex-end; padding-right: 37px; }
.st-keys { width: 30px; height: 24px; margin-top: 12px; }
.st-battery { width: 51px; height: 26px; margin: 11px 0 0 37px; }
.st-wifi { width: 32px; height: 24px; margin: 11px 0 0 37px; }
.st-search { width: 26px; height: 26px; margin: 11px 0 0 39px; }
.st-control { width: 28px; height: 26px; margin: 12px 0 0 37px; }
.siri {
  width: 28px;
  height: 28px;
  margin: 10px 32px 0 34px;
  border-radius: 50%;
  background:
    radial-gradient(circle at 55% 55%, #fff 0, rgba(220, 225, 240, .7) 14%, transparent 40%),
    conic-gradient(#3d7b62, #3a4a8c 90deg, #5aa0c4 140deg, #3a6dbb 190deg, #a54460 250deg, #4a3562 300deg, #3d7b62);
}
.date { letter-spacing: .4px; width: 140px; }
.time { width: 103px; letter-spacing: -.15px; }

/* Browser window */
.window {
  position: relative;
  height: 1644px;
  margin-top: 2px;
  flex: none;
  border-radius: 20px;
  overflow: hidden;
  background: #fff;
  outline: 1px solid #000;
}
.window::after {
  content: "";
  position: absolute;
  inset: 0;
  border: 2px solid rgba(255, 255, 255, .3);
  border-width: 2px 1px 0;
  border-radius: 20px;
}
.tabstrip { height: 84px; display: flex; background: #111213; }
.lights { display: flex; gap: 16px; width: 187px; padding: 31px 0 0 42px; }
.lights i { width: 24px; height: 24px; border-radius: 50%; }
.red { background: #d5694f; }
.amber { background: #e2b840; }
.green { background: #6dba48; }
.tabs { display: flex; padding-top: 16px; }
.tab {
  position: relative;
  width: 174px;
  height: 68px;
  display: flex;
  align-items: center;
  padding: 0 23px 0 24px;
  color: #c4c5c7;
  font-size: 24px;
}
.wide { width: 176px; padding-left: 23px; }
.tab::after {
  content: "";
  position: absolute;
  right: -1px;
  top: 15px;
  width: 2px;
  height: 40px;
  background: #48494c;
}
.fav { width: 32px; height: 32px; }
.pale { fill: #a2a3a5; }
.grey { fill: #82868b; }
.white { fill: #fff; }
.label {
  flex: 1;
  margin: 0 12px 0 15px;
  white-space: nowrap;
  line-height: 34px;
  letter-spacing: -.3px;
  -webkit-mask-image: linear-gradient(90deg, #000 60%, transparent 98%);
  mask-image: linear-gradient(90deg, #000 60%, transparent 98%);
}
.caps { letter-spacing: -1px; }
.x { width: 16px; height: 16px; }
.active { background: #26262b; border-radius: 16px 16px 0 0; color: #fff; }
.active::before, .active::after {
  content: "";
  position: absolute;
  top: auto;
  bottom: 0;
  width: 16px;
  height: 16px;
}
.active::before { left: -16px; background: radial-gradient(circle at 0 0, #111213 15.5px, #26262b 16px); }
.active::after { right: -16px; background: radial-gradient(circle at 100% 0, #111213 15.5px, #26262b 16px); }
.before-active::after { display: none; }
.new-tab { width: 24px; height: 24px; margin: 38px 0 0 33px; }
.tab-search { width: 20px; height: 12px; margin: 44px 0 0 134px; }

.toolbar {
  height: 74px;
  display: flex;
  align-items: center;
  padding-left: 31px;
  background: #26262b;
  border-bottom: 2px solid #505155;
}
.back, .forward { width: 27px; height: 26px; }
.forward { margin-left: 37px; }
.reload { width: 28px; height: 28px; margin: 0 29px 0 37px; }
.omnibox {
  width: 2384px;
  height: 56px;
  display: flex;
  align-items: center;
  padding: 0 21px 0 28px;
  border-radius: 28px;
  background: #111213;
  font-size: 28px;
  color: #fff;
}
.lock { width: 17px; height: 22px; margin-right: 23px; }
.path { color: #85868a; letter-spacing: -.42px; }
.share { width: 22px; height: 29px; margin: 0 38px 0 auto; }
.star { width: 30px; height: 29px; }
.ext { width: 32px; height: 32px; margin-left: 28px; }
.puzzle { width: 29px; height: 29px; margin-left: 34px; }
.avatar {
  width: 44px;
  height: 44px;
  margin-left: 27px;
  border-radius: 50%;
  background: #c56d1d;
  color: #fff;
  font-size: 22px;
  line-height: 44px;
  text-align: center;
}
.dots { width: 8px; height: 28px; margin-left: 38px; }

/* Site navigation */
.navbar {
  height: 112px;
  display: flex;
  align-items: center;
  padding-left: 32px;
  background: #b83b55;
  color: #fff;
  font-size: 32px;
  white-space: nowrap;
}
.brand { width: 239px; padding-top: 1px; line-height: 48px; letter-spacing: -.2px; }
.brand b { font-size: 40px; letter-spacing: -1px; }
.home, .ops { letter-spacing: -.6px; }
.add { letter-spacing: -.85px; }
.home { width: 118px; }
.add { width: 173px; }
.ops { width: 200px; }
.caret { border: 9px solid transparent; border-top-color: #fff; border-bottom: 0; margin-top: -4px; }
.search {
  width: 402px;
  height: 60px;
  margin-left: 1358px;
  padding-left: 23px;
  border: 2px solid #ced4da;
  border-radius: 8px;
  background: #fff;
  color: #6c757d;
  line-height: 57px;
  letter-spacing: -.86px;
}
.gh { width: 31px; height: 31px; margin-left: 59px; fill: #fff; }
.author {
  margin: 5px 0 0 16px;
  font-family: "Liberation Serif", serif;
  font-size: 25.6px;
}

/* Users table */
.page { padding: 48px 30px 0; color: #15171b; }
h1 {
  margin: 0 0 48px;
  font-size: 48px;
  font-weight: 500;
  line-height: 58px;
  letter-spacing: -1.6px;
  text-align: center;
}
table {
  width: 2820px;
  table-layout: fixed;
  border-collapse: separate;
  border-spacing: 0;
  border: solid #dcdde3;
  border-width: 2px 0 0 2px;
  font-size: 32px;
  line-height: 48px;
}
.c1 { width: 938px; }
.c2 { width: 282px; }
.c3 { width: 196px; }
.c4 { width: 310px; }
.c5 { width: 588px; }
.c6 { width: 504px; }
th, td {
  padding: 25px 24px 23px;
  border: solid #dcdde3;
  border-width: 0 2px 2px 0;
  text-align: left;
  vertical-align: top;
}
th { border-bottom-width: 4px; font-weight: 700; letter-spacing: -.3px; }
th.loose { letter-spacing: .1px; }
th.tight { letter-spacing: -.5px; }
td { height: 112px; letter-spacing: -.74px; }
td.city { letter-spacing: -.98px; }
td.short { letter-spacing: -1px; }
td.long { letter-spacing: -.58px; }
td.act { padding: 24px; text-align: center; line-height: 0; }
.btn {
  display: inline-block;
  height: 62px;
  padding: 11px 18px 9px;
  border-radius: 6px;
  background: #ab4139;
  color: #fff;
  font-size: 28px;
  line-height: 42px;
  letter-spacing: -.35px;
  vertical-align: top;
}

/* Dock */
.dock {
  position: relative;
  width: 2024px;
  height: 94px;
  margin: 2px 0 0 428px;
  flex: none;
  display: flex;
  gap: 18px;
  padding: 13px 0 0 13px;
  border: 2px solid rgba(255, 255, 255, .17);
  border-radius: 27px;
  background: linear-gradient(90deg, #0f0a1a 0, #100a22 600px, #140a30 1150px, #2a0b49 1440px, #290a4e 1650px, #1a0a3c 1900px, #190b38 100%);
  box-shadow: 0 0 75px rgba(0, 0, 0, .27);
}
.app { position: relative; width: 58px; height: 58px; flex: none; }
.app > svg { width: 58px; height: 58px; }
.running::after {
  content: "";
  position: absolute;
  left: 25px;
  top: 67px;
  width: 8px;
  height: 8px;
  border-radius: 50%;
  background: rgba(205, 190, 230, .6);
}
.badge {
  position: absolute;
  top: -7px;
  height: 26px;
  border-radius: 13px;
  background: #c54b30;
  color: #fff;
  font-size: 14.5px;
  line-height: 27px;
  text-align: center;
}
.pill { left: 21px; width: 44px; }
.round { left: 39px; width: 26px; }
.cal-month { font: 700 20px Inter, sans-serif; fill: #fff; text-anchor: middle; }
.cal-day { font: 300 61px Inter, sans-serif; fill: #1d1d1d; text-anchor: middle; letter-spacing: -3px; }
.tv { font: 500 43px Inter, sans-serif; fill: #fff; text-anchor: middle; }
.note-n { font: 700 29px Inter, sans-serif; fill: #fff; text-anchor: middle; }
.divider { width: 2px; height: 70px; margin: -3px 0 0 9px; background: rgba(255, 255, 255, .22); }
.minimized { width: 68px; height: 56px; margin: 7px 0 0 2px; }
.trash { width: 52px; height: 68px; margin: -6px 0 0 -3px; }
```
